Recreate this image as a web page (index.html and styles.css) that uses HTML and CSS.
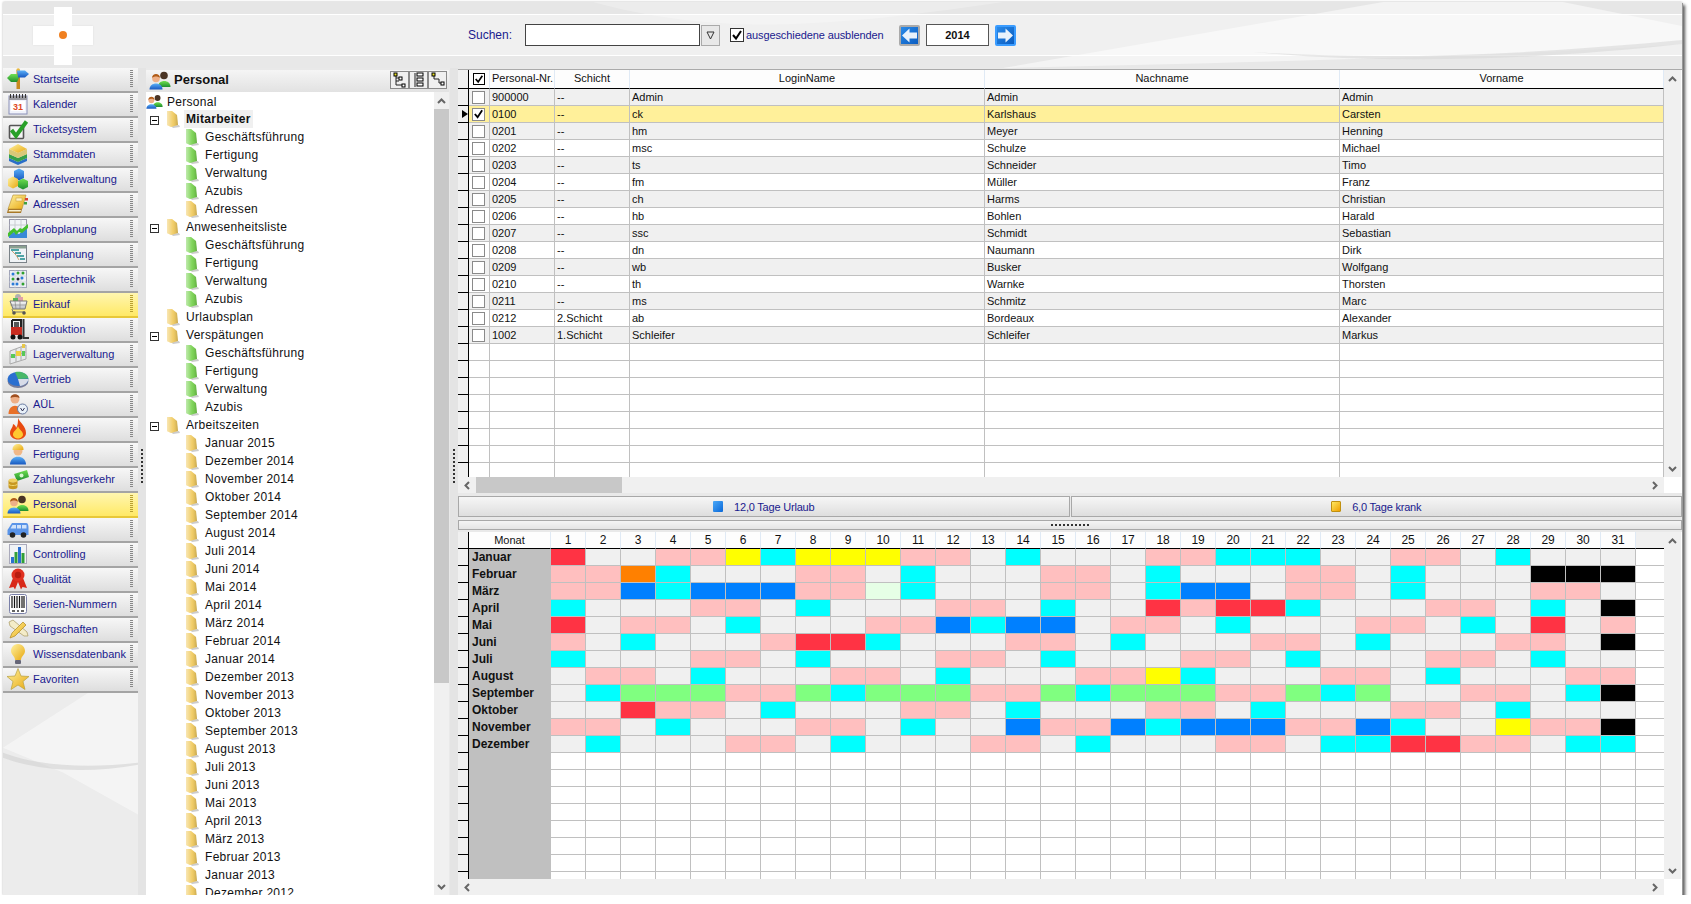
FILE: index.html
```html
<!DOCTYPE html>
<html lang="de">
<head>
    <meta charset="UTF-8">
    <meta name="viewport" content="width=device-width, initial-scale=1.0">
    <title>Personal</title>
    <link rel="stylesheet" href="styles.css">
</head>
<body>
    <svg class="defs" width="0" height="0">
        <defs>
            <linearGradient id="folderShade" x1="0" x2="1" y1="0" y2="0">
                <stop offset="0" stop-color="#fff" stop-opacity=".55"/>
                <stop offset=".55" stop-color="#fff" stop-opacity=".1"/>
                <stop offset="1" stop-color="#000" stop-opacity=".18"/>
            </linearGradient>
            <linearGradient id="gold" x1="0" x2="1" y1="0" y2="1">
                <stop offset="0" stop-color="#fff2a0"/>
                <stop offset="1" stop-color="#e8a810"/>
            </linearGradient>
            <linearGradient id="blue" x1="0" x2="0" y1="0" y2="1">
                <stop offset="0" stop-color="#5ab0f8"/>
                <stop offset="1" stop-color="#1858c0"/>
            </linearGradient>
            <linearGradient id="green" x1="0" x2="0" y1="0" y2="1">
                <stop offset="0" stop-color="#70e050"/>
                <stop offset="1" stop-color="#1e8e2e"/>
            </linearGradient>
            <linearGradient id="silver" x1="0" x2="0" y1="0" y2="1">
                <stop offset="0" stop-color="#fafafa"/>
                <stop offset="1" stop-color="#b8bcc4"/>
            </linearGradient>
        </defs>
        <symbol id="folder" viewBox="0 0 14 18">
            <path d="M5 16 L13 15 L14 17 L7 18 Z" fill="#ccc"/>
            <path d="M1 1 L6 1 L11 5 L12 15 L5 17 L1 15 Z" fill="currentColor"/>
            <path d="M1 1 L6 1 L11 5 L12 15 L5 17 L1 15 Z" fill="url(#folderShade)"/>
        </symbol>
        <symbol id="people" viewBox="0 0 22 22">
            <circle cx="15" cy="6.5" r="3.8" fill="#4a3424"/>
            <path d="M9 18 C9 10 21.5 10 21.5 18 Z" fill="url(#green)"/>
            <circle cx="7" cy="9.5" r="3.8" fill="#eeb088"/>
            <path d="M3 9 C3 3.5 11 3.5 11 9 C9 7 5 7 3 9 Z" fill="#b05c18"/>
            <path d="M0.5 20.5 C0.5 12.5 13.5 12.5 13.5 20.5 Z" fill="url(#blue)"/>
        </symbol>
        <symbol id="up" viewBox="0 0 9 6"><path d="M1 5 L4.5 1.5 L8 5" fill="none" stroke="#666" stroke-width="2"/></symbol>
        <symbol id="down" viewBox="0 0 9 6"><path d="M1 1 L4.5 4.5 L8 1" fill="none" stroke="#666" stroke-width="2"/></symbol>
        <symbol id="left" viewBox="0 0 6 9"><path d="M5 1 L1.5 4.5 L5 8" fill="none" stroke="#666" stroke-width="2"/></symbol>
        <symbol id="right" viewBox="0 0 6 9"><path d="M1 1 L4.5 4.5 L1 8" fill="none" stroke="#666" stroke-width="2"/></symbol>
        <symbol id="tick" viewBox="0 0 12 12"><path d="M2 6 L5 9.5 L10 2" fill="none" stroke="#000" stroke-width="2"/></symbol>
    </svg>

    <div class="window">
        <header class="topbar">
            <svg class="swoosh" viewBox="0 0 1679 66" preserveAspectRatio="none">
                <path d="M590 0 C700 30 800 30 1000 0 Z" fill="#fff" opacity=".25"/>
                <path d="M1000 66 C1250 60 1500 55 1679 42 L1679 24 L1560 0 L1380 0 Z" fill="#fff" opacity=".5"/>
                <path d="M1250 50 C1400 60 1550 50 1679 38 L1679 42 C1550 56 1400 64 1250 50 Z" fill="#d8d8d8" opacity=".6"/>
            </svg>
            <div class="logo"><span class="logo-dot"></span></div>
            <label class="search-label">Suchen:</label>
            <div class="search-box"></div>
            <div class="filter-btn"><svg width="9" height="9" viewBox="0 0 9 9"><path d="M1 1 H8 L4.5 8 Z" fill="none" stroke="#333"/></svg></div>
            <span class="check-box"><svg width="12" height="12"><use href="#tick"/></svg></span>
            <span class="hide-label">ausgeschiedene ausblenden</span>
            <div class="year-btn year-prev"><svg width="17" height="17" viewBox="0 0 17 17"><path d="M1 8.5 L8.5 1.5 V5.5 H16 V11.5 H8.5 V15.5 Z" fill="#e8f2fc"/></svg></div>
            <div class="year-box">2014</div>
            <div class="year-btn year-next"><svg width="17" height="17" viewBox="0 0 17 17"><path d="M16 8.5 L8.5 1.5 V5.5 H1 V11.5 H8.5 V15.5 Z" fill="#e8f2fc"/></svg></div>
        </header>

        <div class="main">
            <nav class="sidebar">
                <a class="nav-btn"><svg viewBox="0 0 22 22"><rect x="9.5" y="2" width="3.5" height="19" fill="#c88a20"/><circle cx="11.2" cy="2" r="1.8" fill="#e8b840"/><path d="M10 6 H4 L0 10 L4 14 H10 L12 10 Z" fill="url(#green)"/><path d="M10 2.5 H18 L22 6 L18 9.5 H11 Z" fill="url(#blue)"/></svg><span>Startseite</span><i></i></a>
                <a class="nav-btn"><svg viewBox="0 0 22 22"><rect x="2" y="3" width="18" height="18" fill="#f0f2fa" stroke="#8a90b8"/><rect x="2" y="3" width="18" height="4" fill="#9a9aa0"/><path d="M3.5 5 V1 M6.5 5 V1 M9.5 5 V1 M12.5 5 V1 M15.5 5 V1 M18.5 5 V1" stroke="#333"/><rect x="4" y="8" width="14" height="10" fill="#fff"/><text x="11" y="16.5" text-anchor="middle" class="cal-day">31</text></svg><span>Kalender</span><i></i></a>
                <a class="nav-btn"><svg viewBox="0 0 22 22"><rect x="2.5" y="7.5" width="14" height="13" rx="1" fill="#f4f4f4" stroke="#555" stroke-width="1.6"/><path d="M4.5 12 L9 18 L19.5 3.5" fill="none" stroke="#28a028" stroke-width="4"/></svg><span>Ticketsystem</span><i></i></a>
                <a class="nav-btn"><svg viewBox="0 0 22 22"><path d="M2 15 L11 19 L20 15 V18 L11 22 L2 18 Z" fill="#2a6fc8"/><path d="M2 11 L11 15 L20 11 V15 L11 19 L2 15 Z" fill="#35a048"/><path d="M2 6 L11 10 L20 6 V11 L11 15 L2 11 Z" fill="#d8c878"/><path d="M2 6 L11 1 L20 6 L11 10 Z" fill="url(#gold)"/></svg><span>Stammdaten</span><i></i></a>
                <a class="nav-btn"><svg viewBox="0 0 22 22"><path d="M7 3 L12 0.5 L17 3 V10 L12 12.5 L7 10 Z" fill="url(#blue)"/><path d="M1 11 L6 8.5 L11 11 V18 L6 20.5 L1 18 Z" fill="url(#gold)"/><path d="M11 13 L16 10.5 L21 13 V19 L16 21.5 L11 19 Z" fill="url(#green)"/></svg><span>Artikelverwaltung</span><i></i></a>
                <a class="nav-btn"><svg viewBox="0 0 22 22"><path d="M6 2 H19 L15 16 H1 Z" fill="url(#gold)" stroke="#b08830" stroke-width=".6"/><path d="M1 16 H15 L14 20 H0 Z" fill="#a87828"/><path d="M2 17 H14 L13.5 18.5 H1.5 Z" fill="#f8f0d0"/><rect x="9" y="5" width="6" height="3" fill="#fff3c0" stroke="#c09840" stroke-width=".5"/><rect x="18" y="5" width="3" height="2.5" fill="#d84030"/><rect x="17" y="9" width="3" height="2.5" fill="#40a040"/></svg><span>Adressen</span><i></i></a>
                <a class="nav-btn"><svg viewBox="0 0 22 22"><rect x="2.5" y="1.5" width="17" height="18" fill="#f2f5f8" stroke="#99a"/><path d="M8 1.5 V19.5 M14 1.5 V19.5 M2.5 7 H19.5 M2.5 13 H19.5" stroke="#c8ccd0"/><path d="M2 20 V15 L8 14 L12 16 L20 9 V20 Z" fill="#3a8ad8"/><path d="M1 15 L7 10 L10 13 L13 10 L15 11 L21 6 V10 L15 15 L12 14 L9 17 L7 14 L1 19 Z" fill="#45c02c"/></svg><span>Grobplanung</span><i></i></a>
                <a class="nav-btn"><svg viewBox="0 0 22 22"><rect x="2.5" y="2.5" width="17" height="17" fill="#f0f3f6" stroke="#7a8288"/><rect x="3" y="3" width="16" height="2.5" fill="#8aa090"/><path d="M4 7 H12 M8 10 H14 M10 13 H17 M13 16 H18" stroke="#1a8a8a" stroke-width="1.6"/><path d="M5 8 L9 12 L12 17" fill="none" stroke="#c08a50" stroke-width=".8"/></svg><span>Feinplanung</span><i></i></a>
                <a class="nav-btn"><svg viewBox="0 0 22 22"><rect x="2.5" y="2.5" width="17" height="17" fill="#eef0f6" stroke="#a0a4b8"/><path d="M2.5 8 H19.5 M2.5 14 H19.5 M8 2.5 V19.5 M14 2.5 V19.5" stroke="#d4d8e0"/><g fill="#2a7ad8"><circle cx="6" cy="6" r="1.5"/><circle cx="15" cy="10" r="1.5"/><circle cx="10" cy="16" r="1.5"/><circle cx="6" cy="16" r="1.5"/></g><g fill="#2fa02f"><circle cx="11" cy="5" r="1.5"/><circle cx="16" cy="5" r="1.5"/><circle cx="6" cy="11" r="1.5"/><circle cx="16" cy="16" r="1.5"/></g><circle cx="11" cy="11" r="1.5" fill="#223"/></svg><span>Lasertechnik</span><i></i></a>
                <a class="nav-btn active"><svg viewBox="0 0 22 22"><rect x="8" y="1" width="6" height="6" rx="3" fill="#b0b0b0"/><rect x="6" y="5" width="5" height="6" fill="#58b858"/><rect x="11" y="4" width="5" height="7" fill="#e0a0a8"/><path d="M3 8 H20 L18 16 H6 Z" fill="url(#silver)" stroke="#777"/><path d="M8 8 L9 16 M13 8 V16 M3.5 12 H19" stroke="#888" stroke-width=".7"/><path d="M5 16 L6 19 H18" fill="none" stroke="#777"/><circle cx="7" cy="20" r="1.8" fill="#555"/><circle cx="17" cy="20" r="1.8" fill="#555"/></svg><span>Einkauf</span><i></i></a>
                <a class="nav-btn"><svg viewBox="0 0 22 22"><path d="M5 2 H14 V10 M5 2 V10" fill="none" stroke="#222" stroke-width="2"/><rect x="4" y="9" width="11" height="8" fill="#c82c20"/><rect x="7" y="4" width="5" height="5" fill="#555"/><path d="M16.5 1 V20 H22" fill="none" stroke="#333" stroke-width="2"/><circle cx="6" cy="19" r="2.5" fill="#111"/><circle cx="13" cy="19" r="2.5" fill="#111"/></svg><span>Produktion</span><i></i></a>
                <a class="nav-btn"><svg viewBox="0 0 22 22"><path d="M3 8 L19 2 V16 L3 21 Z" fill="#e8eaec" stroke="#aaa"/><path d="M3 14 L19 9 M9 6 V19 M14 4 V17" stroke="#aaa"/><rect x="9" y="8" width="5" height="5" fill="#f0d040"/><rect x="4" y="11" width="4" height="4" fill="#58c858"/><rect x="15" y="8" width="3" height="5" fill="#58c858"/><rect x="15" y="1" width="3" height="4" fill="#e8c848"/></svg><span>Lagerverwaltung</span><i></i></a>
                <a class="nav-btn"><svg viewBox="0 0 22 22"><ellipse cx="11" cy="13" rx="10.5" ry="7" fill="#787c98"/><ellipse cx="11" cy="11" rx="10.5" ry="7" fill="#2a6fd0"/><path d="M11 11 L21.5 11 C21.5 14 17 18 13 18 Z" fill="#d8dce8"/><path d="M11 11 L8 4.2 C14 3 20 5 21.5 10.5 Z" fill="#48b868"/></svg><span>Vertrieb</span><i></i></a>
                <a class="nav-btn"><svg viewBox="0 0 22 22"><circle cx="8" cy="6" r="4.5" fill="#eeb088"/><path d="M3.5 5 C3.5 0 12.5 0 12.5 5 C10 3.5 6 3.5 3.5 5 Z" fill="#a05020"/><path d="M1.5 21 C1.5 10 14.5 10 14.5 21 Z" fill="#e87028"/><circle cx="15.5" cy="16" r="5" fill="#e8f0f8" stroke="#6678a0"/><path d="M13.5 15 L15.5 18 L17.5 15" fill="none" stroke="#335"/></svg><span>AÜL</span><i></i></a>
                <a class="nav-btn"><svg viewBox="0 0 22 22"><path d="M11 0 C13 5 19 8 19 15 C19 19 15 21.5 11 21.5 C7 21.5 3 19 3 15 C3 11 6 10 6 6 C8 7 9 8 9 10 C11 7 11 4 11 0 Z" fill="#e84a10"/><path d="M11 8 C12 12 16 13 16 16.5 C16 19 13 20.5 11 20.5 C9 20.5 6 19 6 16.5 C6 13 10 12 11 8 Z" fill="#ffc830"/></svg><span>Brennerei</span><i></i></a>
                <a class="nav-btn"><svg viewBox="0 0 22 22"><circle cx="11" cy="8" r="4.5" fill="#f0b888"/><path d="M5.5 7 C5 -1 17 -1 16.5 7 Z" fill="url(#gold)"/><path d="M3 21.5 C3 11 19 11 19 21.5 Z" fill="url(#blue)"/></svg><span>Fertigung</span><i></i></a>
                <a class="nav-btn"><svg viewBox="0 0 22 22"><path d="M7 6 L20 2 L22 9 L10 13 Z" fill="url(#green)"/><circle cx="14.5" cy="7.5" r="2" fill="#d8f8d0"/><ellipse cx="6" cy="12.5" rx="4.5" ry="2" fill="#f0d060"/><path d="M1.5 12.5 V19 C1.5 22 10.5 22 10.5 19 V12.5 C10 15 2 15 1.5 12.5 Z" fill="#c89820"/><path d="M1.5 16 C2 18 10 18 10.5 16" fill="none" stroke="#f0d870"/></svg><span>Zahlungsverkehr</span><i></i></a>
                <a class="nav-btn active"><svg viewBox="0 0 22 22"><use href="#people"/></svg><span>Personal</span><i></i></a>
                <a class="nav-btn"><svg viewBox="0 0 22 22"><path d="M0.5 12 L5 5 H19 C21 5 21.5 7 21.5 10 V17 H0.5 Z" fill="#5a94e8"/><path d="M5.5 7 H9 V10.5 H3.5 Z M10 7 H14 V10.5 H10 Z M15 7 H19.5 V10.5 H15 Z" fill="#d0e2fa"/><circle cx="5.5" cy="17" r="2.8" fill="#222"/><circle cx="16.5" cy="17" r="2.8" fill="#222"/></svg><span>Fahrdienst</span><i></i></a>
                <a class="nav-btn"><svg viewBox="0 0 22 22"><rect x="2.5" y="1.5" width="17" height="19" fill="#f0f3f6" stroke="#aab"/><rect x="4" y="14" width="3" height="6" fill="#2a70d0"/><rect x="7.5" y="9" width="3" height="11" fill="#30a038"/><rect x="11" y="4" width="3" height="16" fill="#2a70d0"/><rect x="14.5" y="10" width="3" height="10" fill="#30a038"/></svg><span>Controlling</span><i></i></a>
                <a class="nav-btn"><svg viewBox="0 0 22 22"><path d="M6 10 L2 20 L6.5 19 L8 21.5 L11 14 L14 21.5 L15.5 19 L20 20 L16 10 Z" fill="#d82818"/><circle cx="11" cy="7" r="6.5" fill="#e03020"/><circle cx="11" cy="7" r="3.2" fill="#b81c10"/></svg><span>Qualität</span><i></i></a>
                <a class="nav-btn"><svg viewBox="0 0 22 22"><rect x="2.5" y="1.5" width="17" height="19" rx="2" fill="#fff" stroke="#7a80a8"/><path d="M5 3 V15 M7.5 3 V15 M10 3 V15 M12.5 3 V15 M15 3 V15 M17 3 V15" stroke="#111" stroke-width="1.2"/><path d="M5 18 H8 M10 18 H12 M14 18 H17" stroke="#333" stroke-width="1.5"/></svg><span>Serien-Nummern</span><i></i></a>
                <a class="nav-btn"><svg viewBox="0 0 22 22"><path d="M2 4 L6 2 L20 14 L21 18 L17 18 L3 8 Z" fill="#f4ecc8" stroke="#a89860" stroke-width=".7"/><path d="M16 4 L19 7 L8 18 L3 20 L5 15 Z" fill="url(#gold)" stroke="#b08820" stroke-width=".7"/></svg><span>Bürgschaften</span><i></i></a>
                <a class="nav-btn"><svg viewBox="0 0 22 22"><path d="M11 1 C6 1 4 5 4 8 C4 12 8 13 8 17 H14 C14 13 18 12 18 8 C18 5 16 1 11 1 Z" fill="url(#gold)"/><rect x="8" y="17" width="6" height="4" rx="1" fill="#667"/></svg><span>Wissensdatenbank</span><i></i></a>
                <a class="nav-btn"><svg viewBox="0 0 22 22"><path d="M11 0.5 L14 8 L22 8.5 L16 13.5 L18 21.5 L11 17 L4 21.5 L6 13.5 L0 8.5 L8 8 Z" fill="url(#gold)" stroke="#b8a040" stroke-width=".7"/></svg><span>Favoriten</span><i></i></a>
                <div class="side-fill">
                    <svg class="swoosh" viewBox="0 0 135 203" preserveAspectRatio="none">
                        <path d="M0 55 L85 0 L135 0 L135 122 L60 80 Z" fill="#fff" opacity=".45"/>
                        <path d="M0 60 C40 75 90 75 135 70 L135 72 C90 80 40 80 0 65 Z" fill="#ccc" opacity=".5"/>
                    </svg>
                </div>
            </nav>

            <div class="gutter"><span class="grip"></span></div>

            <section class="tree-panel">
                <div class="tree-head">
                    <svg class="tree-head-icon"><use href="#people"/></svg>
                    <b>Personal</b>
                    <div class="tree-tools">
                        <span><svg width="14" height="16" viewBox="0 0 14 16"><path d="M3 2 V13 H9 M3 6 H6 M3 9 H6" fill="none" stroke="#222"/><rect x="1" y="1" width="3" height="3" fill="#e8e020" stroke="#000"/><rect x="6" y="5" width="3" height="3" fill="#fff" stroke="#000"/><rect x="9" y="12" width="3" height="3" fill="#fff" stroke="#000"/></svg></span>
                        <span><svg width="14" height="16" viewBox="0 0 14 16"><path d="M3 1 V15" stroke="#222"/><rect x="5" y="1" width="6" height="3" fill="#fff" stroke="#000"/><rect x="5" y="6" width="6" height="3" fill="#fff" stroke="#000"/><rect x="5" y="11" width="6" height="3" fill="#fff" stroke="#000"/></svg></span>
                        <span><svg width="14" height="16" viewBox="0 0 14 16"><path d="M3 2 V7 H8 V11 H11" fill="none" stroke="#222"/><rect x="1" y="1" width="3" height="3" fill="#e8e020" stroke="#000"/><rect x="10" y="10" width="3" height="3" fill="#fff" stroke="#000"/></svg></span>
                    </div>
                </div>
                <div class="tree-body">
                    <ul class="tree">
                        <li class="root"><svg class="root-icon"><use href="#people"/></svg>Personal</li>
                        <li class="l1"><span class="toggle"></span><svg class="folder"><use href="#folder"/></svg><span class="selected">Mitarbeiter</span></li>
                        <li class="l2 green"><svg class="folder"><use href="#folder"/></svg>Geschäftsführung</li>
                        <li class="l2 green"><svg class="folder"><use href="#folder"/></svg>Fertigung</li>
                        <li class="l2 green"><svg class="folder"><use href="#folder"/></svg>Verwaltung</li>
                        <li class="l2 green"><svg class="folder"><use href="#folder"/></svg>Azubis</li>
                        <li class="l2"><svg class="folder"><use href="#folder"/></svg>Adressen</li>
                        <li class="l1"><span class="toggle"></span><svg class="folder"><use href="#folder"/></svg>Anwesenheitsliste</li>
                        <li class="l2 green"><svg class="folder"><use href="#folder"/></svg>Geschäftsführung</li>
                        <li class="l2 green"><svg class="folder"><use href="#folder"/></svg>Fertigung</li>
                        <li class="l2 green"><svg class="folder"><use href="#folder"/></svg>Verwaltung</li>
                        <li class="l2 green"><svg class="folder"><use href="#folder"/></svg>Azubis</li>
                        <li class="l1"><span class="toggle none"></span><svg class="folder"><use href="#folder"/></svg>Urlaubsplan</li>
                        <li class="l1"><span class="toggle"></span><svg class="folder"><use href="#folder"/></svg>Verspätungen</li>
                        <li class="l2 green"><svg class="folder"><use href="#folder"/></svg>Geschäftsführung</li>
                        <li class="l2 green"><svg class="folder"><use href="#folder"/></svg>Fertigung</li>
                        <li class="l2 green"><svg class="folder"><use href="#folder"/></svg>Verwaltung</li>
                        <li class="l2 green"><svg class="folder"><use href="#folder"/></svg>Azubis</li>
                        <li class="l1"><span class="toggle"></span><svg class="folder"><use href="#folder"/></svg>Arbeitszeiten</li>
                        <li class="l2"><svg class="folder"><use href="#folder"/></svg>Januar 2015</li>
                        <li class="l2"><svg class="folder"><use href="#folder"/></svg>Dezember 2014</li>
                        <li class="l2"><svg class="folder"><use href="#folder"/></svg>November 2014</li>
                        <li class="l2"><svg class="folder"><use href="#folder"/></svg>Oktober 2014</li>
                        <li class="l2"><svg class="folder"><use href="#folder"/></svg>September 2014</li>
                        <li class="l2"><svg class="folder"><use href="#folder"/></svg>August 2014</li>
                        <li class="l2"><svg class="folder"><use href="#folder"/></svg>Juli 2014</li>
                        <li class="l2"><svg class="folder"><use href="#folder"/></svg>Juni 2014</li>
                        <li class="l2"><svg class="folder"><use href="#folder"/></svg>Mai 2014</li>
                        <li class="l2"><svg class="folder"><use href="#folder"/></svg>April 2014</li>
                        <li class="l2"><svg class="folder"><use href="#folder"/></svg>März 2014</li>
                        <li class="l2"><svg class="folder"><use href="#folder"/></svg>Februar 2014</li>
                        <li class="l2"><svg class="folder"><use href="#folder"/></svg>Januar 2014</li>
                        <li class="l2"><svg class="folder"><use href="#folder"/></svg>Dezember 2013</li>
                        <li class="l2"><svg class="folder"><use href="#folder"/></svg>November 2013</li>
                        <li class="l2"><svg class="folder"><use href="#folder"/></svg>Oktober 2013</li>
                        <li class="l2"><svg class="folder"><use href="#folder"/></svg>September 2013</li>
                        <li class="l2"><svg class="folder"><use href="#folder"/></svg>August 2013</li>
                        <li class="l2"><svg class="folder"><use href="#folder"/></svg>Juli 2013</li>
                        <li class="l2"><svg class="folder"><use href="#folder"/></svg>Juni 2013</li>
                        <li class="l2"><svg class="folder"><use href="#folder"/></svg>Mai 2013</li>
                        <li class="l2"><svg class="folder"><use href="#folder"/></svg>April 2013</li>
                        <li class="l2"><svg class="folder"><use href="#folder"/></svg>März 2013</li>
                        <li class="l2"><svg class="folder"><use href="#folder"/></svg>Februar 2013</li>
                        <li class="l2"><svg class="folder"><use href="#folder"/></svg>Januar 2013</li>
                        <li class="l2"><svg class="folder"><use href="#folder"/></svg>Dezember 2012</li>
                    </ul>
                    <div class="vscroll">
                        <span class="arrow"><svg width="9" height="6"><use href="#up"/></svg></span>
                        <span class="vthumb"></span>
                        <span class="arrow end"><svg width="9" height="6"><use href="#down"/></svg></span>
                    </div>
                </div>
            </section>

            <div class="gutter"><span class="grip"></span></div>

            <section class="content">
                <div class="grid-wrap staff">
                    <div class="grid-view">
                        <table class="grid staff-grid">
                            <colgroup><col class="c-ind"><col class="c-chk"><col class="c-nr"><col class="c-shift"><col class="c-wide"><col class="c-wide"><col class="c-first"></colgroup>
                            <thead>
                                <tr><th class="ind"></th><th class="chk"><span class="check-box small"><svg width="10" height="10"><use href="#tick"/></svg></span></th><th class="left">Personal-Nr.</th><th>Schicht</th><th>LoginName</th><th>Nachname</th><th>Vorname</th></tr>
                            </thead>
                            <tbody id="staffRows"></tbody>
                        </table>
                    </div>
                    <div class="vscroll">
                        <span class="arrow"><svg width="9" height="6"><use href="#up"/></svg></span>
                        <span class="arrow end"><svg width="9" height="6"><use href="#down"/></svg></span>
                    </div>
                    <div class="hscroll">
                        <span class="harrow"><svg width="6" height="9"><use href="#left"/></svg></span>
                        <span class="hthumb"></span>
                        <span class="harrow end"><svg width="6" height="9"><use href="#right"/></svg></span>
                    </div>
                    <div class="corner"></div>
                </div>

                <div class="summary">
                    <div class="summary-btn"><span class="mark mark-blue"></span>12,0 Tage Urlaub</div>
                    <div class="summary-btn"><span class="mark mark-yellow"></span>6,0 Tage krank</div>
                </div>

                <div class="splitter"><span></span></div>

                <div class="grid-wrap calendar">
                    <div class="grid-view">
                        <table class="grid cal-grid">
                            <colgroup id="calCols"></colgroup>
                            <thead><tr id="calHead"></tr></thead>
                            <tbody id="calRows"></tbody>
                        </table>
                    </div>
                    <div class="vscroll">
                        <span class="arrow"><svg width="9" height="6"><use href="#up"/></svg></span>
                        <span class="arrow end"><svg width="9" height="6"><use href="#down"/></svg></span>
                    </div>
                    <div class="hscroll">
                        <span class="harrow"><svg width="6" height="9"><use href="#left"/></svg></span>
                        <span class="harrow end"><svg width="6" height="9"><use href="#right"/></svg></span>
                    </div>
                    <div class="corner"></div>
                </div>
            </section>
        </div>
    </div>

    <script src="script.js"></script>
</body>
</html>
```

FILE: styles.css
```css
* {
    margin: 0;
    padding: 0;
    box-sizing: border-box;
}

body {
    background-color: #fff;
    color: #111;
    font-family: "Liberation Sans", Arial, sans-serif;
    font-size: 11px;
    overflow: hidden;
}

.defs {
    display: block;
    height: 0;
}

.window {
    display: flex;
    flex-direction: column;
    width: 1679px;
    height: 893px;
    margin: 2px 0 0 3px;
    background-color: #e9e9e9;
    box-shadow: 0 0 2px #bbb, 1px 1px 0 #888, 3px 3px 3px #555;
}

/* top bar */
.topbar {
    position: relative;
    display: flex;
    align-items: center;
    height: 66px;
    flex: none;
    border-top: 12px solid #e6e6e6;
    border-bottom: 12px solid #e8e8e8;
    background-color: #f0f0f0;
    box-shadow: inset 0 1px 0 #fff, inset 0 -1px 0 #fff;
}

.swoosh {
    position: absolute;
    left: 0;
    top: -12px;
    width: 100%;
    height: 66px;
    pointer-events: none;
}

.logo {
    position: relative;
    flex: none;
    width: 60px;
    height: 19px;
    margin-left: 30px;
    background-color: #fff;
    box-shadow: 0 0 2px #ddd;
}

.logo::before {
    content: "";
    position: absolute;
    left: 21px;
    top: -19px;
    width: 18px;
    height: 58px;
    background-color: #fff;
}

.logo-dot {
    position: absolute;
    left: 26px;
    top: 5px;
    width: 8px;
    height: 8px;
    border-radius: 50%;
    background-color: #f08020;
}

.search-label {
    position: relative;
    margin-left: 375px;
    width: 57px;
    font-size: 12px;
    color: #1a1a8e;
}

.search-box {
    position: relative;
    width: 175px;
    height: 22px;
    background-color: #fff;
    border: 1px solid #444;
}

.filter-btn {
    position: relative;
    display: flex;
    align-items: center;
    justify-content: center;
    width: 19px;
    height: 21px;
    margin-left: 1px;
    background-color: #e8e8e8;
    border: 1px solid #aaa;
}

.check-box {
    position: relative;
    display: inline-flex;
    align-items: center;
    justify-content: center;
    width: 14px;
    height: 14px;
    margin-left: 10px;
    background-color: #fff;
    border: 1px solid #333;
}

.check-box.small {
    width: 12px;
    height: 12px;
    margin: 0;
    border-color: #000;
}

.hide-label {
    position: relative;
    width: 153px;
    margin-left: 2px;
    letter-spacing: -0.1px;
    color: #1a1a8e;
}

.year-btn {
    position: relative;
    display: flex;
    align-items: center;
    justify-content: center;
    width: 21px;
    height: 21px;
    border-radius: 2px;
    border: 2px solid #aaa;
    background: linear-gradient(135deg, #2a8ae8, #0a5cc0);
}

.year-next {
    border-color: #3a9cff;
}

.year-box {
    position: relative;
    display: flex;
    align-items: center;
    justify-content: center;
    width: 63px;
    height: 22px;
    margin: 0 6px;
    background-color: #fff;
    border: 1px solid #555;
    font-weight: bold;
}

.main {
    display: flex;
    flex: 1;
    min-height: 0;
}

/* left navigation */
.sidebar {
    display: flex;
    flex-direction: column;
    flex: none;
    width: 135px;
}

.nav-btn {
    display: flex;
    align-items: center;
    flex: none;
    height: 25px;
    padding: 0 5px 2px 4px;
    background: linear-gradient(#f7f7f7, #dedede);
    border-bottom: 2px solid #a4a4a4;
    color: #1a1a8e;
}

.nav-btn svg {
    flex: none;
    width: 22px;
    height: 22px;
    margin-right: 4px;
}

.nav-btn span {
    flex: 1;
    white-space: nowrap;
}

.nav-btn i {
    width: 3px;
    height: 18px;
    background: repeating-linear-gradient(#888 0 1px, transparent 1px 2px);
}

.nav-btn.active {
    background: linear-gradient(#fff6b0, #ffe966);
    border-bottom-color: #e8c838;
}

.nav-btn.active i {
    background: repeating-linear-gradient(#b8a030 0 1px, transparent 1px 2px);
}

.cal-day {
    font: bold 9px "Liberation Sans", sans-serif;
    fill: #e0481c;
}

.side-fill {
    position: relative;
    flex: 1;
    background-color: #ececec;
}

.side-fill .swoosh {
    top: 0;
    height: 100%;
}

.gutter {
    display: flex;
    align-items: center;
    justify-content: center;
    flex: none;
    width: 8px;
    background-color: #e4e4e4;
}

.grip {
    width: 2px;
    height: 36px;
    margin-bottom: 30px;
    background: repeating-linear-gradient(#333 0 2px, transparent 2px 4px);
}

/* tree */
.tree-panel {
    display: flex;
    flex-direction: column;
    flex: none;
    width: 304px;
    padding: 2px 1px 0 0;
}

.tree-head {
    display: flex;
    align-items: center;
    flex: none;
    height: 22px;
    padding: 0 0 3px 3px;
    background: linear-gradient(#f5f5f5, #e2e2e2);
    font-size: 13px;
}

.tree-head-icon {
    width: 22px;
    height: 22px;
    margin-right: 3px;
}

.tree-tools {
    display: flex;
    margin-left: auto;
    margin-right: 2px;
}

.tree-tools span {
    display: flex;
    align-items: center;
    justify-content: center;
    width: 19px;
    height: 18px;
    background-color: #f0f0f0;
    border: 1px solid #8a8a8a;
}

.tree-body {
    display: grid;
    grid-template-columns: 1fr 15px;
    flex: 1;
    min-height: 0;
    background-color: #fff;
}

.tree {
    list-style: none;
    overflow: hidden;
    font-size: 12px;
    letter-spacing: 0.3px;
    color: #111;
}

.tree li {
    display: flex;
    align-items: center;
    height: 18px;
    white-space: nowrap;
}

.tree .root {
    padding-top: 1px;
}

.root-icon {
    width: 17px;
    height: 17px;
    margin-right: 4px;
}

.tree .l1 {
    padding-left: 4px;
}

.tree .l2 {
    padding-left: 39px;
}

.folder {
    flex: none;
    width: 14px;
    height: 18px;
    margin-right: 6px;
    color: #f0c858;
}

.green .folder {
    color: #72d048;
}

.toggle {
    position: relative;
    flex: none;
    width: 9px;
    height: 9px;
    margin: 2px 7px 0 0;
    background-color: #fff;
    border: 1px solid #333;
}

.toggle::after {
    content: "";
    position: absolute;
    left: 1px;
    right: 1px;
    top: 3px;
    height: 1px;
    background-color: #000;
}

.toggle.none {
    visibility: hidden;
}

.selected {
    margin-left: -2px;
    padding: 0 2px;
    height: 18px;
    line-height: 18px;
    background-color: #f0f0f0;
    font-weight: bold;
}

/* scrollbars */
.vscroll {
    display: flex;
    flex-direction: column;
    align-items: stretch;
    background-color: #f0f0f0;
    min-height: 0;
}

.arrow {
    display: flex;
    align-items: center;
    justify-content: center;
    flex: none;
    height: 17px;
}

.arrow.end {
    margin-top: auto;
}

.vthumb {
    flex: none;
    height: 574px;
    background-color: #c8c8c8;
}

.hscroll {
    display: flex;
    align-items: center;
    background-color: #f0f0f0;
}

.harrow {
    display: flex;
    align-items: center;
    justify-content: center;
    flex: none;
    width: 18px;
    height: 100%;
}

.harrow.end {
    margin-left: auto;
}

.hthumb {
    flex: none;
    width: 146px;
    height: 100%;
    background-color: #c8c8c8;
}

.corner {
    background-color: #fff;
}

/* right side */
.content {
    display: flex;
    flex-direction: column;
    flex: 1;
    min-width: 0;
    padding-top: 1px;
}

.grid-wrap {
    display: grid;
    grid-template-columns: 1206px 17px;
    grid-template-rows: 1fr 16px;
    min-height: 0;
    background-color: #fff;
}

.staff {
    flex: none;
    height: 424px;
    border-top: 1px solid #aaa;
}

.calendar {
    flex: 1;
    margin-top: 2px;
}

.grid-view {
    overflow: hidden;
    min-height: 0;
}

.grid {
    width: 1206px;
    table-layout: fixed;
    border-collapse: separate;
    border-spacing: 0;
}

.c-ind { width: 11px; }
.c-chk { width: 21px; }
.c-nr { width: 65px; }
.c-shift { width: 75px; }
.c-wide { width: 355px; }
.c-first { width: 324px; }
.c-month { width: 82px; }
.c-day { width: 35px; }
.c-rest { width: 28px; }

.grid th {
    height: 19px;
    padding: 0 2px 3px;
    background-color: #fdfdfd;
    border-bottom: 1px solid #000;
    border-right: 1px solid #e0eaf5;
    font-weight: normal;
    text-align: center;
    line-height: 14px;
    vertical-align: middle;
    white-space: nowrap;
    overflow: hidden;
}

.grid th.left {
    text-align: left;
}

.grid th.ind,
.grid td.ind {
    padding: 0;
    background-color: #f0f0f0;
    border-right: 1px solid #000;
    border-bottom: 1px solid #000;
}

.grid th.chk {
    padding: 0 0 3px;
}

.grid th.chk .check-box {
    vertical-align: middle;
}

.grid td {
    height: 17px;
    padding: 0 2px;
    border-bottom: 1px solid #c0c0c0;
    border-right: 1px solid #c0c0c0;
    line-height: 15px;
    white-space: nowrap;
    overflow: hidden;
}

.staff-grid tr.alt td {
    background-color: #f0f0f0;
}

.staff-grid tr.current td {
    background-color: #fff09a;
}

.grid tr td.ind {
    background-color: #f0f0f0;
}

.row-arrow {
    display: block;
    width: 0;
    height: 0;
    margin-left: 4px;
    border-left: 6px solid #000;
    border-top: 4px solid transparent;
    border-bottom: 4px solid transparent;
}

.grid td.chk {
    padding: 0 0 0 3px;
}

.row-check {
    display: flex;
    align-items: center;
    justify-content: center;
    width: 13px;
    height: 13px;
    background-color: #fff;
    border: 1px solid #8a8a8a;
}

/* summary and splitter */
.summary {
    display: flex;
    flex: none;
    gap: 1px;
    margin-top: 3px;
}

.summary-btn {
    display: flex;
    align-items: center;
    justify-content: center;
    flex: 1;
    height: 21px;
    background: linear-gradient(#f6f6f6, #dedede);
    border: 1px solid #a8a8a8;
    color: #1a1a8e;
    letter-spacing: -0.2px;
}

.mark {
    width: 10px;
    height: 11px;
    margin-right: 11px;
    border-radius: 1px;
}

.mark-blue {
    background: linear-gradient(135deg, #4aa8f8, #0a68d8);
}

.mark-yellow {
    background: linear-gradient(135deg, #ffe860, #f0a000);
    border: 1px solid #c09010;
}

.splitter {
    display: flex;
    align-items: center;
    justify-content: center;
    flex: none;
    height: 10px;
    margin-top: 3px;
    background: linear-gradient(#f4f4f4, #e4e4e4);
    border: 1px solid #a8a8a8;
}

.splitter span {
    width: 38px;
    height: 2px;
    background: repeating-linear-gradient(90deg, #333 0 2px, transparent 2px 4px);
}

/* calendar */
.cal-grid th {
    height: 17px;
    padding-bottom: 1px;
    font-size: 12px;
    letter-spacing: -0.2px;
}

.cal-grid th.month-head {
    font-size: 11px;
    letter-spacing: 0;
}

.cal-grid th.rest {
    background-color: #f0f0f0;
    border-right: 0;
}

.cal-grid td {
    padding: 0;
}

.cal-grid td.month {
    padding-left: 3px;
    background-color: #c0c0c0;
    border: 0;
    font-size: 12px;
    font-weight: bold;
}

.cal-grid td.rest {
    border-right: 0;
}

.day-p { background-color: #ffbfbf; }
.day-g { background-color: #f0f0f0; }
.day-c { background-color: #00ffff; }
.day-r { background-color: #ff3344; }
.day-y { background-color: #ffff00; }
.day-b { background-color: #0080ff; }
.day-o { background-color: #ff8000; }
.day-k { background-color: #000; }
.day-n { background-color: #80ff80; }
.day-l { background-color: #e6ffe6; }
```

FILE: script.js
```js
const staff = [
    ['900000', '--', 'Admin', 'Admin', 'Admin'],
    ['0100', '--', 'ck', 'Karlshaus', 'Carsten'],
    ['0201', '--', 'hm', 'Meyer', 'Henning'],
    ['0202', '--', 'msc', 'Schulze', 'Michael'],
    ['0203', '--', 'ts', 'Schneider', 'Timo'],
    ['0204', '--', 'fm', 'Müller', 'Franz'],
    ['0205', '--', 'ch', 'Harms', 'Christian'],
    ['0206', '--', 'hb', 'Bohlen', 'Harald'],
    ['0207', '--', 'ssc', 'Schmidt', 'Sebastian'],
    ['0208', '--', 'dn', 'Naumann', 'Dirk'],
    ['0209', '--', 'wb', 'Busker', 'Wolfgang'],
    ['0210', '--', 'th', 'Warnke', 'Thorsten'],
    ['0211', '--', 'ms', 'Schmitz', 'Marc'],
    ['0212', '2.Schicht', 'ab', 'Bordeaux', 'Alexander'],
    ['1002', '1.Schicht', 'Schleifer', 'Schleifer', 'Markus']
];

// one letter per day, see the .day-* classes
const months = [
    ['Januar', 'rggppycyyyppgcgggppcccggppgcggg'],
    ['Februar', 'ppocgggppgcgggppgcgggppgcgggkkk'],
    ['März', 'ppbcbbbpplcgggppgcbbgppgcgggppg'],
    ['April', 'cgggppgcgggppgcggrprrcgggppgcgk'],
    ['Mai', 'rgppgcgggppbcbbgppgcgggppgcgrgp'],
    ['Juni', 'pgcgggprrcgggppgcgggppgcgggppgk'],
    ['Juli', 'cgggppgcgggppgcgggppgcgggppgcgg'],
    ['August', 'gppgcgggppgcgggppycgggppgcgggpp'],
    ['September', 'gcnnnppncnnnppncnnnppncnggppgck'],
    ['Oktober', 'ggrppgcgggppgcgggppgcgggppgcggg'],
    ['November', 'ppgcgggppgcggbppbcbbbppbcggyppk'],
    ['Dezember', 'gcgggppgcgggppgcgggppgccrrppgcc']
];

const staffRows = document.getElementById('staffRows');
const TOTAL_STAFF_ROWS = 23;

for (let i = 0; i < TOTAL_STAFF_ROWS; i++) {
    const person = staff[i];
    const tr = document.createElement('tr');
    let html = '<td class="ind"></td>';

    if (person) {
        if (i === 1) {
            tr.className = 'current';
            html = '<td class="ind"><span class="row-arrow"></span></td>';
        } else if (i % 2 === 0) {
            tr.className = 'alt';
        }
        const tick = i === 1 ? '<svg width="12" height="12"><use href="#tick"/></svg>' : '';
        html += `<td class="chk"><span class="row-check">${tick}</span></td>`;
        person.forEach(value => { html += `<td>${value}</td>`; });
    } else {
        html += '<td></td><td></td><td></td><td></td><td></td><td></td>';
    }
    tr.innerHTML = html;
    staffRows.appendChild(tr);
}

// calendar
const calCols = document.getElementById('calCols');
const calHead = document.getElementById('calHead');
const calRows = document.getElementById('calRows');
const TOTAL_CAL_ROWS = 20;

let cols = '<col class="c-ind"><col class="c-month">';
let head = '<th class="ind"></th><th class="month-head">Monat</th>';
for (let d = 1; d <= 31; d++) {
    cols += '<col class="c-day">';
    head += `<th>${d}</th>`;
}
calCols.innerHTML = cols + '<col class="c-rest">';
calHead.innerHTML = head + '<th class="rest"></th>';

for (let i = 0; i < TOTAL_CAL_ROWS; i++) {
    const month = months[i];
    let html = `<td class="ind"></td><td class="month">${month ? month[0] : ''}</td>`;
    for (let d = 0; d < 31; d++) {
        html += month ? `<td class="day-${month[1][d]}"></td>` : '<td></td>';
    }
    const tr = document.createElement('tr');
    tr.innerHTML = html + '<td class="rest"></td>';
    calRows.appendChild(tr);
}
```
